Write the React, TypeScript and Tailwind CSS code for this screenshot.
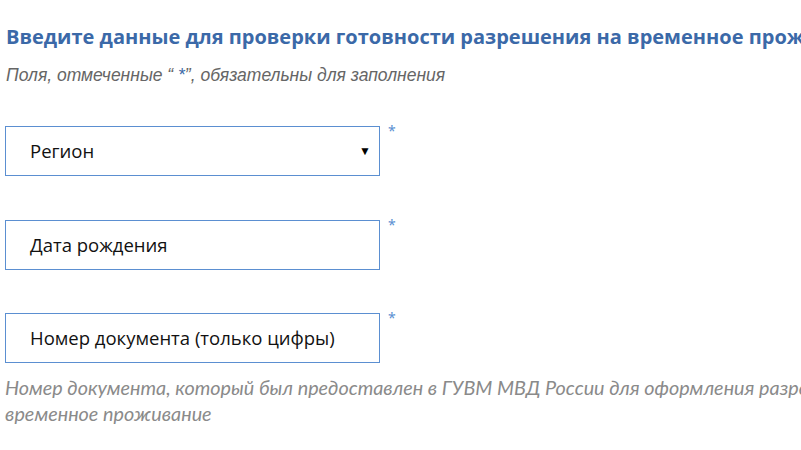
export default function App() {
  return (
    <div className="w-[801px] h-[450px] overflow-hidden bg-white pl-[6px] pt-[22px]">
      <h1 className="whitespace-nowrap font-['Open_Sans',sans-serif] text-[20px] font-bold leading-[30px] text-[#3b69a8]">
        Введите данные для проверки готовности разрешения на временное проживание
      </h1>
      <p className="mt-[12px] whitespace-nowrap font-['Liberation_Sans',Arial,sans-serif] text-[17.5px] italic leading-[22px] text-[#666]">
        Поля, отмеченные “ <span className="text-[#3b69a8]">*</span>”, обязательны для заполнения
      </p>

      <div className="mt-[40px] flex flex-col gap-[43.5px]">
        <Field label="Регион" select />
        <Field label="Дата рождения" />
        <Field label="Номер документа (только цифры)" />
      </div>

      <p className="mt-[11px] ml-[-1px] w-[900px] font-['Lato',sans-serif] text-[19.8px] italic leading-[26px] text-[#8a8a8a]">
        Номер документа, который был предоставлен в ГУВМ МВД России для оформления разрешения на
        <br />
        временное проживание
      </p>
    </div>
  );
}

function Field({ label, select }: { label: string; select?: boolean }) {
  return (
    <div className="flex items-start">
      <div className="ml-[-1px] flex h-[50px] w-[375px] items-center justify-between border border-[#5b8fd1] pl-[24px] pr-[8px] font-['Open_Sans',sans-serif] text-[18.5px] text-[#111]">
        <span>{label}</span>
        {select && <span className="text-[12px] text-black">▼</span>}
      </div>
      <span className="ml-[8px] mt-[-6px] text-[14px] text-[#5b8fd1]">*</span>
    </div>
  );
}
